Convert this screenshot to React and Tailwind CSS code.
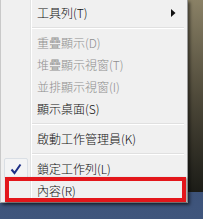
import React from 'react';

const font = { fontFamily: '"Noto Sans CJK TC", "Noto Sans", sans-serif' };

const Separator = () => (
  <div className="h-[8px] flex items-center pl-[31px] pr-[3px]">
    <div className="w-full border-t border-[#e0e0e0] border-b border-b-white" />
  </div>
);

const Item = ({ label, disabled, checked, submenu }) => (
  <div className="relative h-[22px] flex items-center pl-[36px] pr-[10px]">
    {checked && (
      <div className="absolute left-[3px] top-[0px] w-[24px] h-[21px] rounded-[2px] border border-[#dadfe5] bg-[#f3f4f5] flex items-center justify-center">
        <svg width="12" height="12" viewBox="0 0 12 12">
          <path d="M1.5 6.5 L4.5 10 L10.5 1.5" fill="none" stroke="#1d2f86" strokeWidth="2" />
        </svg>
      </div>
    )}
    <span
      className={`text-[12px] leading-none font-light ${disabled ? 'text-[#8f8f8f]' : 'text-[#111]'}`}
    >
      {label}
    </span>
    {submenu && (
      <svg className="ml-auto mr-[1px]" width="5" height="8" viewBox="0 0 5 8">
        <path d="M0 0 L4.5 4 L0 8 Z" fill="#111" />
      </svg>
    )}
  </div>
);

export default function App() {
  return (
    <div
      className="relative w-[203px] h-[219px] overflow-hidden bg-gradient-to-b from-[#31466b] to-[#3f557c]"
      style={font}
    >
      <div className="flex h-[203px]">
        {/* context menu */}
        <div className="relative w-[188px] h-[203px] bg-[#f0f0f0] border-l border-[#c9c9c9] border-r border-r-[#9a9a9a] border-b border-b-[#9a9a9a] shadow-[2px_2px_3px_rgba(0,0,0,0.5)]">
          <div className="absolute left-[29px] top-0 bottom-0 w-[2px] border-l border-[#e2e3e3] border-r border-r-white" />
          <div className="relative pt-[2px]">
            <Item label="工具列(T)" submenu />
            <Separator />
            <Item label="重疊顯示(D)" disabled />
            <Item label="堆疊顯示視窗(T)" disabled />
            <Item label="並排顯示視窗(I)" disabled />
            <Item label="顯示桌面(S)" />
            <Separator />
            <Item label="啟動工作管理員(K)" />
            <Separator />
            <Item label="鎖定工作列(L)" checked />
            <Item label="內容(R)" />
          </div>
        </div>
        {/* wallpaper strip */}
        <div className="flex-1 h-[192px] bg-gradient-to-b from-[#8a8166] via-[#4f4a3a] to-[#1c1c17]" />
      </div>
      {/* red highlight annotation */}
      <div className="absolute left-[5px] top-[177px] w-[181px] h-[25px] border-[4px] border-[#e3161b] shadow-[1px_1px_2px_rgba(0,0,0,0.4)]" />
    </div>
  );
}
